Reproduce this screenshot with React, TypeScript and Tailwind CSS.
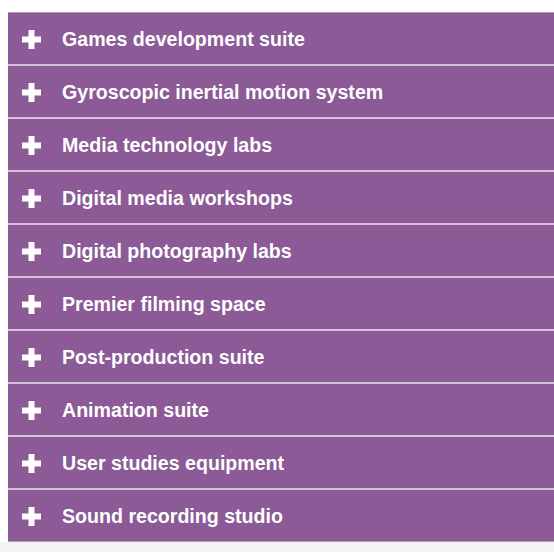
const items = [
  "Games development suite",
  "Gyroscopic inertial motion system",
  "Media technology labs",
  "Digital media workshops",
  "Digital photography labs",
  "Premier filming space",
  "Post-production suite",
  "Animation suite",
  "User studies equipment",
  "Sound recording studio",
];

function Plus() {
  return (
    <svg width="19" height="19" viewBox="0 0 19 19" className="shrink-0">
      <rect x="6.5" y="0" width="6" height="19" fill="#fff" />
      <rect x="0" y="6.5" width="19" height="6" fill="#fff" />
    </svg>
  );
}

export default function App() {
  return (
    <div className="w-[554px] h-[552px] bg-white font-['Liberation_Sans',Arial,sans-serif] flex flex-col">
      <div className="pt-[12px] pl-[8px]">
        <ul className="border-t border-[#b59cbd]">
          {items.map((label, i) => (
            <li
              key={label}
              className={
                i < items.length - 1
                  ? "h-[53px] bg-[#8b5a97] border-b-2 border-[#d3c2d8] flex items-center gap-[21px] pl-[14px] pt-[2px]"
                  : "h-[52px] bg-[#8b5a97] border-b border-[#b59cbd] flex items-center gap-[21px] pl-[14px] pt-[2px]"
              }
            >
              <Plus />
              <span className="text-white text-[19.6px] font-bold">{label}</span>
            </li>
          ))}
        </ul>
      </div>
      <div className="flex-1 bg-[#f3f3f3]" />
    </div>
  );
}
